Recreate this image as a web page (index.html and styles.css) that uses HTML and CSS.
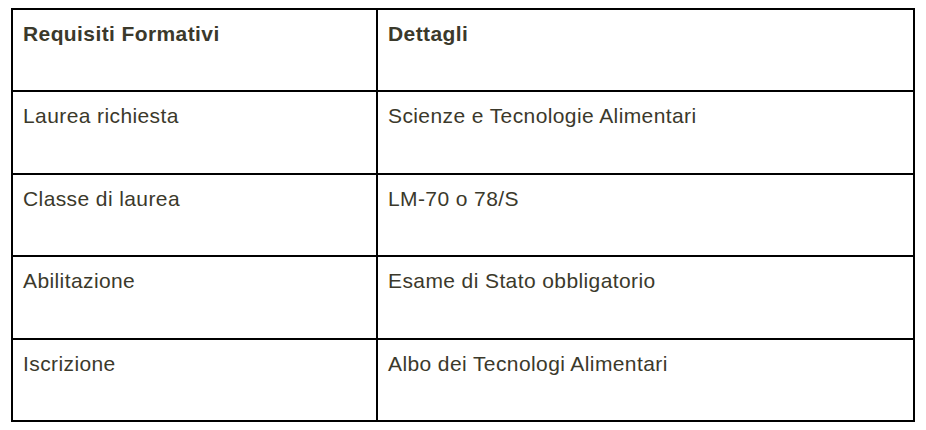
FILE: index.html
```html
<!DOCTYPE html>
<html lang="it">
<head>
<meta charset="utf-8">
<title>Requisiti Formativi</title>
<link rel="stylesheet" href="styles.css">
</head>
<body>
<table class="req-table">
  <thead>
    <tr>
      <th class="col-a">Requisiti Formativi</th>
      <th class="col-b">Dettagli</th>
    </tr>
  </thead>
  <tbody>
    <tr><td>Laurea richiesta</td><td>Scienze e Tecnologie Alimentari</td></tr>
    <tr><td>Classe di laurea</td><td>LM-70 o 78/S</td></tr>
    <tr><td>Abilitazione</td><td>Esame di Stato obbligatorio</td></tr>
    <tr><td>Iscrizione</td><td>Albo dei Tecnologi Alimentari</td></tr>
  </tbody>
</table>
</body>
</html>
```
FILE: styles.css
```css
html, body {
  margin: 0;
  background: #ffffff;
}
body {
  padding: 8px 11px;
  font-family: "Liberation Sans", Arial, sans-serif;
  font-size: 21px;
  color: #3b392b;
}
.req-table {
  width: 904px;
  border: 1px solid #000;
  border-spacing: 0;
  table-layout: fixed;
}
.req-table tr {
  height: 82.4px;
}
.req-table th,
.req-table td {
  border: 1px solid #000;
  padding: 12px 10px;
  text-align: left;
  vertical-align: top;
  font-size: 21px;
  letter-spacing: 0.4px;
  line-height: normal;
}
.req-table th {
  font-weight: bold;
}
.col-a {
  width: 365px;
  box-sizing: border-box;
}
```
